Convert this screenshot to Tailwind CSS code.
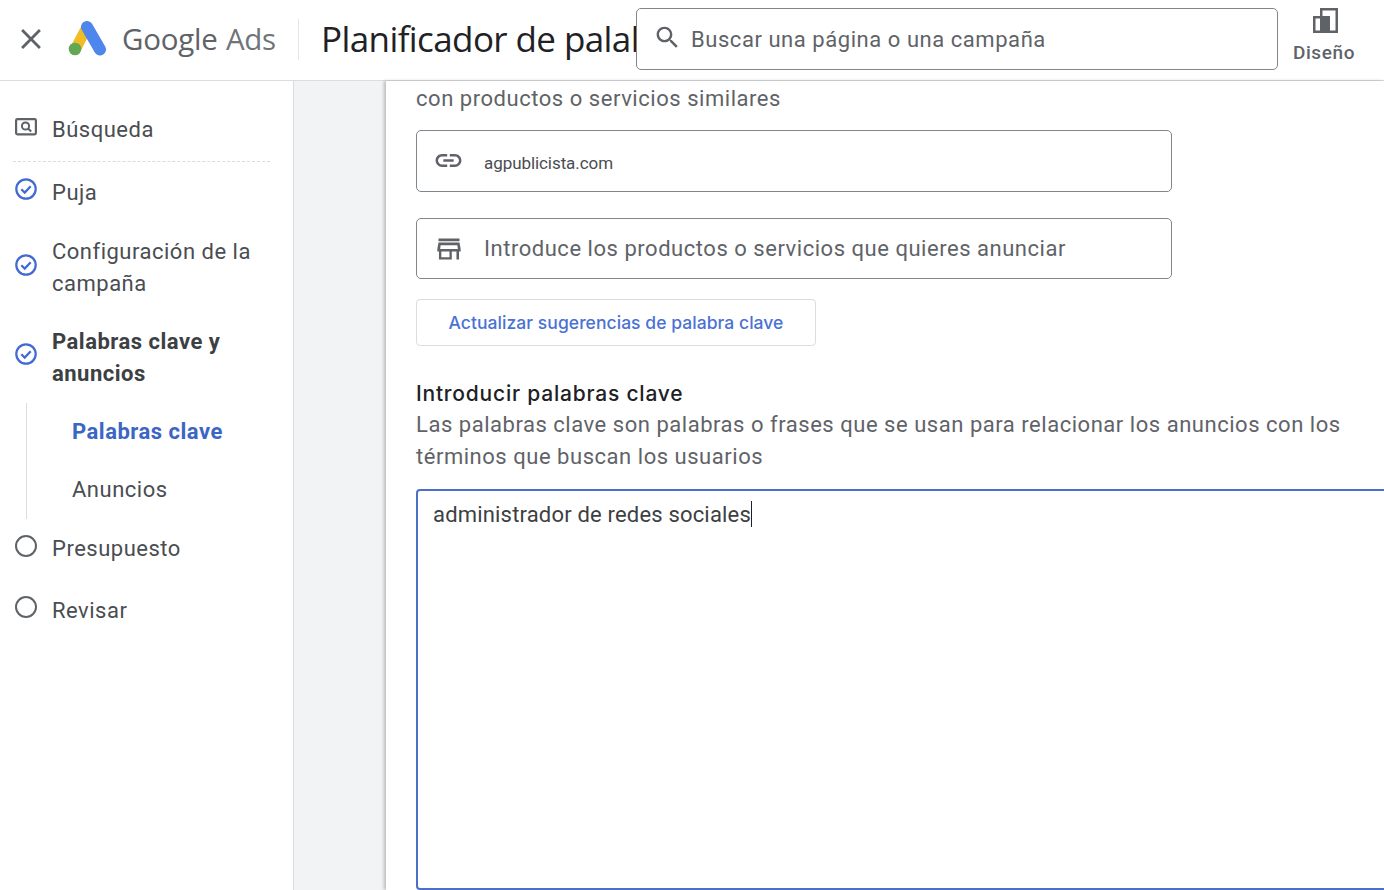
<!DOCTYPE html>
<html lang="es">
<head>
<meta charset="utf-8">
<script src="https://cdn.jsdelivr.net/npm/@tailwindcss/browser@4"></script>
<title>Google Ads</title>
</head>
<body class="h-[890px] w-[1384px] overflow-hidden bg-white font-['Roboto',sans-serif] text-[#5f6368]">
<header class="flex h-[81px] items-start border-b border-[#dadce0] bg-white">
  <svg class="mt-[22px] ml-[14px] h-[34px] w-[34px]" viewBox="0 0 24 24" fill="#5f6368"><path d="M19 6.41L17.59 5 12 10.59 6.41 5 5 6.41 10.59 12 5 17.59 6.41 19 12 13.41 17.59 19 19 17.59 13.41 12z"/></svg>
  <svg class="mt-[20px] ml-[20px] h-[38px] w-[40px]" viewBox="0 0 40 38" fill="none">
    <path d="M19 7 L8 28" stroke="#f1bc24" stroke-width="11" stroke-linecap="round"/>
    <path d="M19 7 L32 29.5" stroke="#4f86ed" stroke-width="12" stroke-linecap="round"/>
    <circle cx="7" cy="29" r="6.3" fill="#62a754"/>
  </svg>
  <div class="mt-[20px] ml-[14px] w-[176px] text-[29.5px] leading-[38px] font-medium whitespace-nowrap font-['Open_Sans',sans-serif] tracking-[-0.25px] text-[#5f6368]">Google <span class="ml-[1px] text-[#70757a]">Ads</span></div>
  <div class="mt-[19px] h-[41px] w-px bg-[#e3e5e8]"></div>
  <div class="mt-[16px] ml-[22px] w-[315px] overflow-hidden text-[35px] leading-[46px] whitespace-nowrap font-['Open_Sans',sans-serif] tracking-[-0.6px] text-[#202124]">Planificador de palabras clave</div>
  <div class="mt-[8px] flex h-[62px] w-[642px] items-center rounded-[5px] border border-[#80868b] bg-white pl-[16px]">
    <svg class="mb-[4px] h-[29px] w-[29px]" viewBox="0 0 24 24" fill="#5f6368"><path d="M15.5 14h-.79l-.28-.27C15.41 12.59 16 11.11 16 9.5 16 5.91 13.09 3 9.5 3S3 5.91 3 9.5 5.91 16 9.5 16c1.61 0 3.09-.59 4.23-1.57l.27.28v.79l5 4.99L20.49 19l-4.99-5zm-6 0C7.01 14 5 11.99 5 9.5S7.01 5 9.5 5 14 7.01 14 9.5 11.99 14 9.5 14z"/></svg>
    <span class="ml-[9px] text-[22px] tracking-[0.55px]">Buscar una página o una campaña</span>
  </div>
  <div class="ml-[15px] flex w-[62px] flex-col items-center pt-[8px]">
    <svg class="ml-[2px] h-[25px] w-[25px]" viewBox="0 0 25 25" fill="#5f6368" fill-rule="evenodd"><path d="M7 0H25V25H0V8H7ZM9.5 2.5V8H17V22.5H22.5V2.5ZM2.5 10.5V22.5H7V10.5Z"/></svg>
    <span class="mt-[8px] text-[19px] leading-[24px] font-medium tracking-[0.6px]">Diseño</span>
  </div>
</header>
<div class="flex h-[809px]">
  <nav class="w-[294px] shrink-0 border-r border-[#dadce0] bg-white pt-[18px] text-[22px] leading-[32px] tracking-[0.5px] text-[#4a4d51]">
    <div class="flex h-[62px] items-center pl-[15px] pb-[1px]">
      <svg class="mb-[6px] h-[18px] w-[22px]" viewBox="0 0 22 18" fill="none"><rect x="1.1" y="1.1" width="19.8" height="15.3" rx="1.3" stroke="#5f6368" stroke-width="2.2"/><circle cx="10.5" cy="8" r="3.6" stroke="#5f6368" stroke-width="2"/><path d="M13 10.5l3.2 3" stroke="#5f6368" stroke-width="2.2"/></svg>
      <span class="ml-[15px]">Búsqueda</span>
    </div>
    <div class="mr-[23px] ml-[13px] border-t border-dashed border-[#dadce0]"></div>
    <div class="flex h-[61px] items-center pl-[15px]">
      <svg class="mb-[7px] h-[22px] w-[22px] shrink-0" viewBox="0 0 22 22" fill="none"><circle cx="11" cy="11" r="9.7" stroke="#4169d4" stroke-width="2.2"/><path d="M6.3 11.2l3.4 3.4 6-6.4" stroke="#4169d4" stroke-width="2.2"/></svg>
      <span class="ml-[15px]">Puja</span>
    </div>
    <div class="mt-[13px] flex h-[64px] items-center pl-[15px]">
      <svg class="mt-[-6px] h-[22px] w-[22px] shrink-0" viewBox="0 0 22 22" fill="none"><circle cx="11" cy="11" r="9.7" stroke="#4169d4" stroke-width="2.2"/><path d="M6.3 11.2l3.4 3.4 6-6.4" stroke="#4169d4" stroke-width="2.2"/></svg>
      <span class="ml-[15px]">Configuración de la campaña</span>
    </div>
    <div class="mt-[26px] flex h-[64px] items-center pl-[15px]">
      <svg class="mt-[-8px] h-[22px] w-[22px] shrink-0" viewBox="0 0 22 22" fill="none"><circle cx="11" cy="11" r="9.7" stroke="#4169d4" stroke-width="2.2"/><path d="M6.3 11.2l3.4 3.4 6-6.4" stroke="#4169d4" stroke-width="2.2"/></svg>
      <span class="ml-[15px] font-bold text-[#3c4043]">Palabras clave y anuncios</span>
    </div>
    <div class="mt-[13px] ml-[26px] border-l border-[#dadce0] pl-[45px]">
      <div class="flex h-[58px] items-center font-bold text-[#3b66c4]">Palabras clave</div>
      <div class="flex h-[58px] items-center">Anuncios</div>
    </div>
    <div class="flex h-[60px] items-center pl-[15px]">
      <span class="mb-[6px] h-[22px] w-[22px] shrink-0 rounded-full border-[2.3px] border-[#5f6368]"></span>
      <span class="ml-[15px]">Presupuesto</span>
    </div>
    <div class="mt-[2px] flex h-[60px] items-center pl-[15px]">
      <span class="mb-[8px] h-[22px] w-[22px] shrink-0 rounded-full border-[2.3px] border-[#5f6368]"></span>
      <span class="ml-[15px]">Revisar</span>
    </div>
  </nav>
  <div class="w-[92px] shrink-0 bg-[#f1f3f4]"></div>
  <main class="min-w-0 flex-1 overflow-hidden bg-white pl-[30px] shadow-[-2px_0_3px_rgba(60,64,67,0.3)]">
    <p class="pt-[2px] text-[22px] leading-[32px] tracking-[0.54px]">con productos o servicios similares</p>
    <div class="mt-[15px] flex h-[62px] w-[756px] items-center rounded-[5px] border border-[#80868b] pl-[16px]">
      <svg class="mb-[2px] h-[31px] w-[31px]" viewBox="0 0 24 24" fill="#5f6368"><path d="M3.9 12c0-1.71 1.39-3.1 3.1-3.1h4V7H7c-2.76 0-5 2.24-5 5s2.24 5 5 5h4v-1.9H7c-1.71 0-3.1-1.39-3.1-3.1zM8 13h8v-2H8v2zm9-6h-4v1.9h4c1.71 0 3.1 1.39 3.1 3.1s-1.39 3.1-3.1 3.1h-4V17h4c2.76 0 5-2.24 5-5s-2.24-5-5-5z"/></svg>
      <span class="mt-[6px] ml-[20px] text-[17px] tracking-[-0.07px] text-[#4a4d51]">agpublicista.com</span>
    </div>
    <div class="mt-[26px] flex h-[61px] w-[756px] items-center rounded-[5px] border border-[#80868b] pl-[18px]">
      <svg class="h-[28px] w-[28px]" viewBox="0 0 24 24" fill="#5f6368" fill-rule="evenodd"><path d="M3 3h18v2.4H3zM21 6.5H3l-1 5.5v2.2h1.4V21h11v-6.8h4V21h2.2v-6.8H22V12l-1-5.5zM12.4 19H5.4v-4.8h7V19zM4.4 12l.4-3.3h14.4l.4 3.3H4.4z"/></svg>
      <span class="ml-[21px] text-[22px] tracking-[0.53px]">Introduce los productos o servicios que quieres anunciar</span>
    </div>
    <button class="mt-[20px] flex h-[47px] w-[400px] items-center justify-center rounded-[4px] border border-[#dadce0] bg-white pt-[2px] font-['Inter',sans-serif] text-[17.5px] font-medium tracking-[0.05px] text-[#4a72d6]">Actualizar sugerencias de palabra clave</button>
    <h2 class="mt-[32px] h-[31px] font-['Inter',sans-serif] text-[21px] leading-[32px] font-medium tracking-[0.78px] text-[#202124]">Introducir palabras clave</h2>
    <p class="w-[940px] text-[22px] leading-[32px] tracking-[0.53px]">Las palabras clave son palabras o frases que se usan para relacionar los anuncios con los términos que buscan los usuarios</p>
    <div class="mt-[16px] h-[401px] w-[1000px] rounded-l-[4px] border-2 border-[#4a70c8] pt-[5px] pl-[15px] text-[22px] leading-[32px] tracking-[0.18px] text-[#3c4043]">administrador de redes sociales<span class="inline-block h-[26px] w-px translate-y-[5px] bg-[#202124]"></span></div>
  </main>
</div>
</body>
</html>
